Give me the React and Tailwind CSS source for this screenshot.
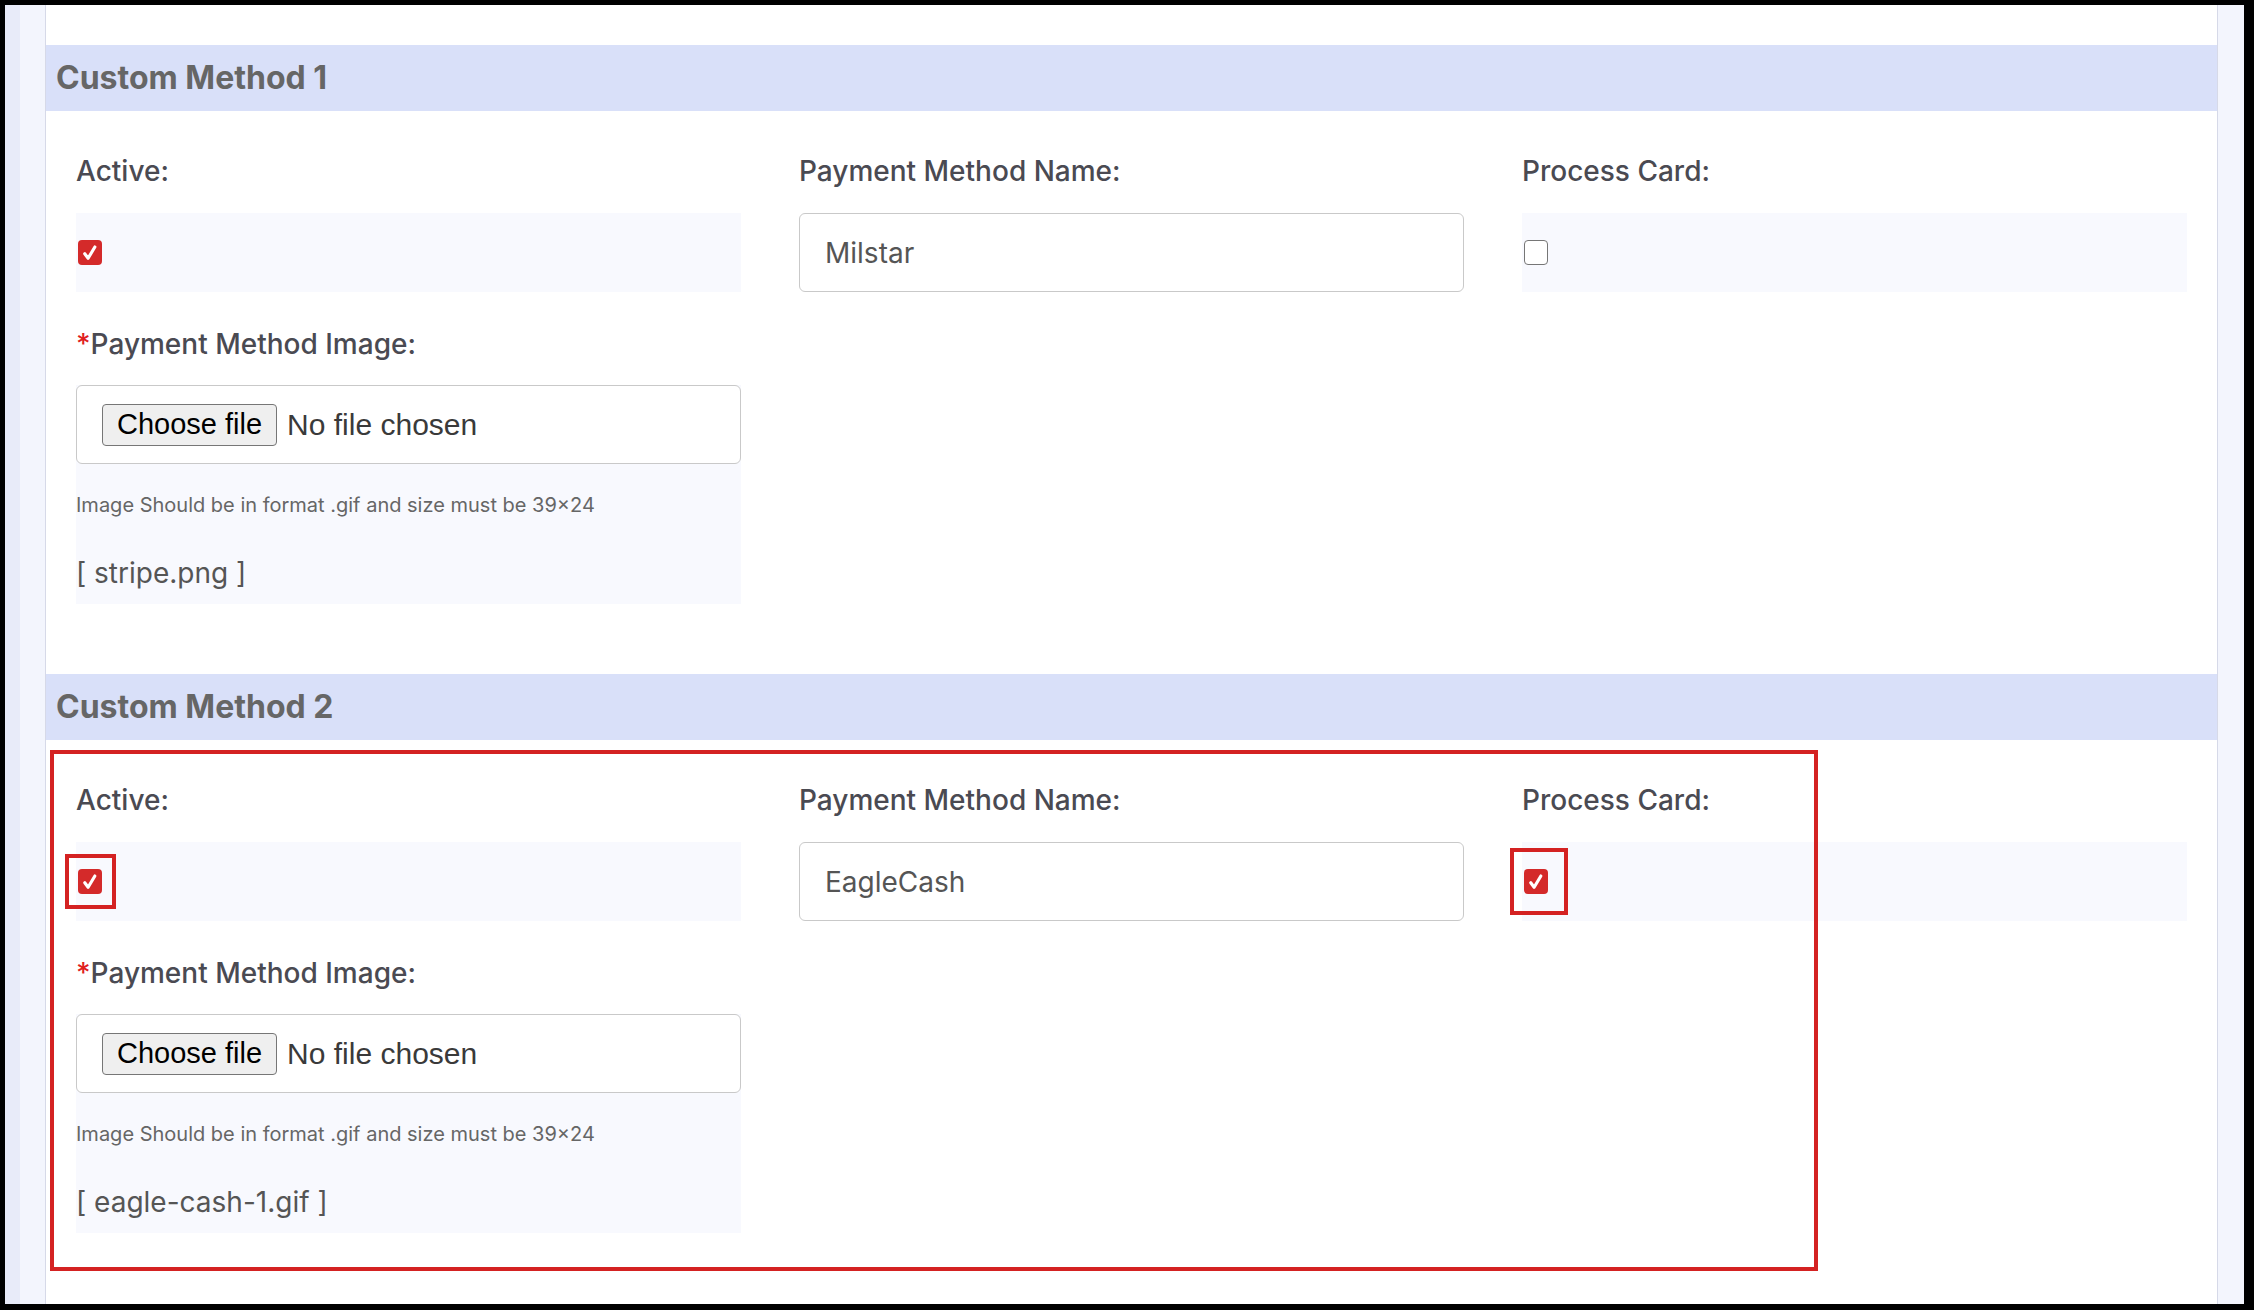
import React from 'react';

/* ── Checkbox (custom drawn, like the red themed one) ── */
function Check({ checked, marked }) {
  return (
    <span className="relative inline-flex">
      {checked ? (
        <span className="w-[24px] h-[25px] rounded-[4px] bg-[#d42a2a] flex items-center justify-center">
          <svg width="18" height="18" viewBox="0 0 24 24" fill="none" stroke="#fff" strokeWidth="4.2" strokeLinecap="round" strokeLinejoin="round">
            <polyline points="5 13 9.5 19 18.5 4" />
          </svg>
        </span>
      ) : (
        <span className="w-[24px] h-[25px] rounded-[4px] bg-white border-[1.5px] border-[#767676]" />
      )}
      {marked === 'a' && (
        <span className="absolute -left-[13px] -right-[14px] -top-[15px] -bottom-[15px] border-[4px] border-[#d42222]" />
      )}
      {marked === 'b' && (
        <span className="absolute -left-[14px] -right-[20px] -top-[21px] -bottom-[21px] border-[4px] border-[#d42222]" />
      )}
    </span>
  );
}

function Label({ children, required }) {
  return (
    <div className="text-[28px] leading-[33px] font-medium text-[#4a4a52]">
      {required && <span className="text-[#e02020]">*</span>}
      {children}
    </div>
  );
}

function CheckField({ label, checked, marked }) {
  return (
    <div>
      <Label>{label}</Label>
      <div className="mt-[25px] h-[79px] bg-[#f8f9fe] flex items-center pl-[2px]">
        <Check checked={checked} marked={marked} />
      </div>
    </div>
  );
}

function TextField({ label, value }) {
  return (
    <div>
      <Label>{label}</Label>
      <div className="mt-[25px] h-[79px] border border-[#c9c9c9] rounded-[6px] bg-white flex items-center px-[25px] text-[28px] text-[#555]">
        {value}
      </div>
    </div>
  );
}

function ImageField({ file }) {
  return (
    <div>
      <Label required>Payment Method Image:</Label>
      <div className="mt-[24px] bg-[#f8f9fe]">
        <div className="h-[79px] border border-[#c9c9c9] rounded-[6px] bg-white flex items-center pl-[25px] gap-[10px]" style={{ fontFamily: '"Liberation Sans", Arial, sans-serif' }}>
          <span className="h-[42px] px-[14px] flex items-center bg-[#efefef] border-[1.5px] border-[#767676] rounded-[4px] text-[29px] text-black">
            Choose file
          </span>
          <span className="text-[30px] text-[#3a3a3a]">No file chosen</span>
        </div>
        <div className="pt-[27px] text-[20px] leading-[28px] text-[#666]">
          Image Should be in format .gif and size must be 39×24
        </div>
        <div className="pt-[38px] pb-[14px] text-[28px] leading-[33px] text-[#555]">[ {file} ]</div>
      </div>
    </div>
  );
}

function Section({ title, name, active, processCard, file, annotate }) {
  return (
    <div>
      <div className="h-[66px] bg-[#d9e0f9] flex items-center pl-[10px] text-[32px] font-bold text-[#666]">
        {title}
      </div>
      <div className="relative px-[30px] pt-[44px] pb-[70px]">
        {annotate && (
          <div className="absolute left-[4px] top-[10px] w-[1768px] h-[521px] border-[4px] border-[#d42222] pointer-events-none" />
        )}
        <div className="grid grid-cols-3 gap-x-[58px] gap-y-[36px]">
          <CheckField label="Active:" checked={active} marked={annotate ? 'a' : null} />
          <TextField label="Payment Method Name:" value={name} />
          <CheckField label="Process Card:" checked={processCard} marked={annotate ? 'b' : null} />
          <ImageField file={file} />
        </div>
      </div>
    </div>
  );
}

export default function App() {
  return (
    <div className="h-[1310px] w-full bg-black pt-[5px] pl-[5px] pr-[10px] pb-[6px] overflow-hidden" style={{ fontFamily: 'Inter, "Noto Sans", sans-serif' }}>
      <div className="h-full flex bg-[#f3f5fd] border-l-[15px] border-l-[#e8ebf9] pl-[25px] pr-[26px]">
        <div className="flex-1 bg-white border-x border-[#d6d9e8] pt-[40px] overflow-hidden">
          <Section title="Custom Method 1" name="Milstar" active processCard={false} file="stripe.png" />
          <Section title="Custom Method 2" name="EagleCash" active processCard file="eagle-cash-1.gif" annotate />
        </div>
      </div>
    </div>
  );
}
